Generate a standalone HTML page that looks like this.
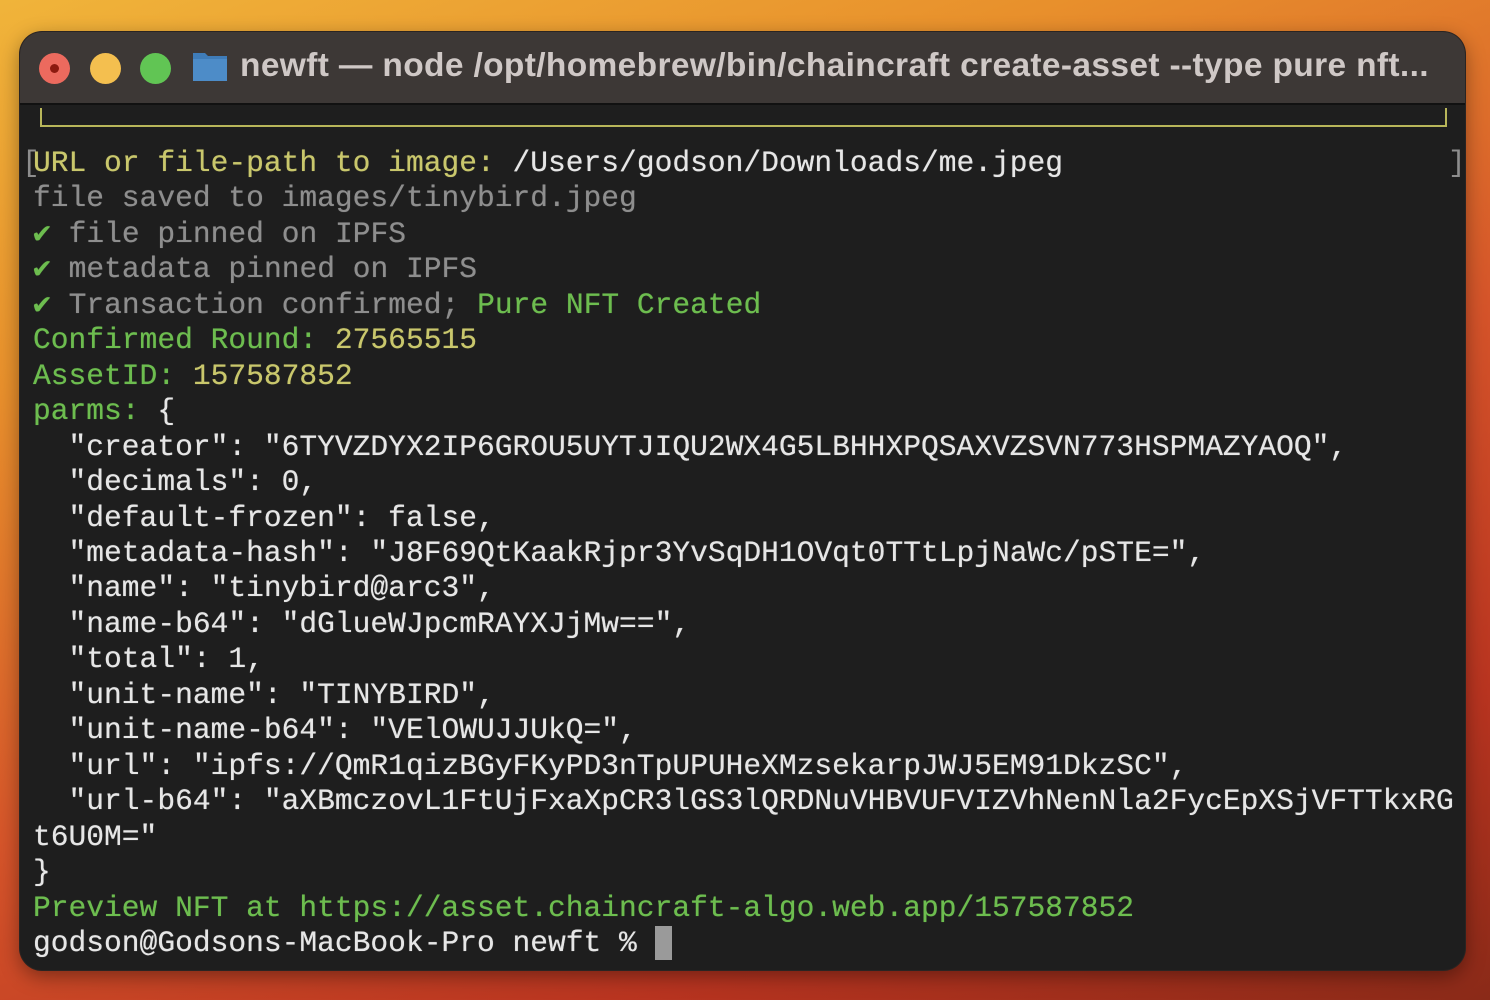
<!DOCTYPE html>
<html><head><meta charset="utf-8"><style>
html,body{margin:0;padding:0;width:1490px;height:1000px;overflow:hidden;}
body{background:linear-gradient(160deg,#f0b43a 0%,#e8902c 25%,#d5542a 55%,#b83420 80%,#8a2a18 100%);position:relative;font-family:"Liberation Sans",sans-serif;}
.win{position:absolute;left:20px;top:32px;width:1445px;height:938px;border-radius:22px;background:#1e1e1e;overflow:hidden;box-shadow:0 0 0 1px #2a2422,0 6px 20px rgba(0,0,0,.4);}
.tb{position:absolute;left:0;top:0;width:100%;height:71px;background:#3d3836;border-bottom:2px solid #111;}
.dot{position:absolute;top:21px;width:31px;height:31px;border-radius:50%;}
.title{position:absolute;left:220px;top:15px;font-weight:bold;font-size:33.5px;letter-spacing:0.35px;color:#cfc8c6;white-space:pre;}
.folder{position:absolute;left:172px;top:18px;width:36px;height:32px;}
.t{position:absolute;left:13px;top:114px;font-family:"Liberation Mono",monospace;font-size:29.6px;line-height:35.45px;white-space:pre;color:#e6e6e6;text-shadow:0 0 0.6px currentColor;}
.y{color:#c9c76c}.g{color:#6dbd4f}.d{color:#8e8e8e}.w{color:#e6e6e6}
.box{position:absolute;left:20px;top:76px;width:1403px;height:17px;border:2px solid #b8b65a;border-top:none;}
</style></head><body>
<div class="win">
 <div class="tb">
  <div class="dot" style="left:19px;background:#ec6a5e"><div style="position:absolute;left:11px;top:11px;width:9px;height:9px;border-radius:50%;background:#8c1a10"></div></div>
  <div class="dot" style="left:70px;background:#f4bf4f"></div>
  <div class="dot" style="left:120px;background:#61c554"></div>
  <svg class="folder" viewBox="0 0 36 32"><path d="M1 3h12l3 3h19v25H1z" fill="#3f7cb8"/><rect x="1" y="9" width="34" height="22" fill="#4d8cc8"/></svg>
  <div class="title">newft — node /opt/homebrew/bin/chaincraft create-asset --type pure nft...</div>
 </div>
 <div class="box"></div>
 <div style="position:absolute;left:2px;top:114px;font-family:'Liberation Mono',monospace;font-size:29.6px;line-height:35.45px;color:#8e8e8e">[</div>
 <div style="position:absolute;left:1428px;top:114px;font-family:'Liberation Mono',monospace;font-size:29.6px;line-height:35.45px;color:#8e8e8e">]</div>
 <div class="t"><span class="y">URL or file-path to image: </span><span class="w">/Users/godson/Downloads/me.jpeg</span>
<span class="d">file saved to images/tinybird.jpeg</span>
<span class="g">✔</span><span class="d"> file pinned on IPFS</span>
<span class="g">✔</span><span class="d"> metadata pinned on IPFS</span>
<span class="g">✔</span><span class="d"> Transaction confirmed; </span><span class="g">Pure NFT Created</span>
<span class="g">Confirmed Round: </span><span class="y">27565515</span>
<span class="g">AssetID: </span><span class="y">157587852</span>
<span class="g">parms: </span>{
  "creator": "6TYVZDYX2IP6GROU5UYTJIQU2WX4G5LBHHXPQSAXVZSVN773HSPMAZYAOQ",
  "decimals": 0,
  "default-frozen": false,
  "metadata-hash": "J8F69QtKaakRjpr3YvSqDH1OVqt0TTtLpjNaWc/pSTE=",
  "name": "tinybird@arc3",
  "name-b64": "dGlueWJpcmRAYXJjMw==",
  "total": 1,
  "unit-name": "TINYBIRD",
  "unit-name-b64": "VElOWUJJUkQ=",
  "url": "ipfs://QmR1qizBGyFKyPD3nTpUPUHeXMzsekarpJWJ5EM91DkzSC",
  "url-b64": "aXBmczovL1FtUjFxaXpCR3lGS3lQRDNuVHBVUFVIZVhNenNla2FycEpXSjVFTTkxRG
t6U0M="
}
<span class="g">Preview NFT at https://asset.chaincraft-algo.web.app/157587852</span>
godson@Godsons-MacBook-Pro newft % <span style="background:#9a9a9a;color:#9a9a9a"> </span></div>
</div>
</body></html>
